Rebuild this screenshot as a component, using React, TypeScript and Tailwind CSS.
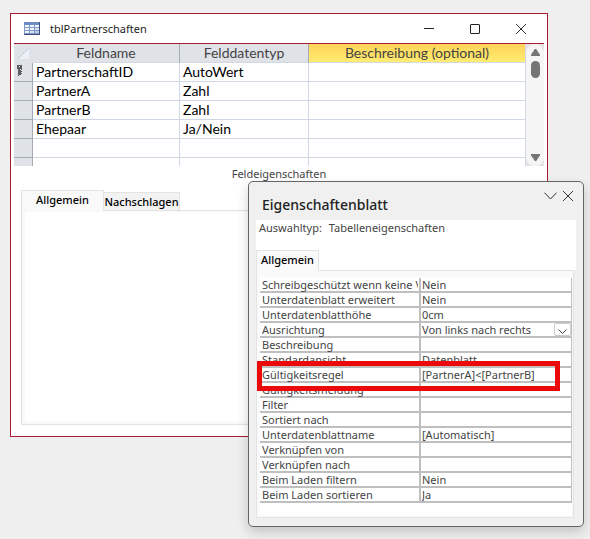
import { useState } from "react";

interface Field {
  name: string;
  type: string;
  primary?: boolean;
}

interface Property {
  id: string;
  label: string;
  value: string;
  options?: string[];
}

const fields: Field[] = [
  { name: "PartnerschaftID", type: "AutoWert", primary: true },
  { name: "PartnerA", type: "Zahl" },
  { name: "PartnerB", type: "Zahl" },
  { name: "Ehepaar", type: "Ja/Nein" },
  { name: "", type: "" },
  { name: "", type: "" },
];

const properties: Property[] = [
  { id: "readonly", label: "Schreibgeschützt wenn keine Verbindung", value: "Nein" },
  { id: "expanded", label: "Unterdatenblatt erweitert", value: "Nein" },
  { id: "height", label: "Unterdatenblatthöhe", value: "0cm" },
  {
    id: "orientation",
    label: "Ausrichtung",
    value: "Von links nach rechts",
    options: ["Von links nach rechts", "Von rechts nach links"],
  },
  { id: "description", label: "Beschreibung", value: "" },
  { id: "view", label: "Standardansicht", value: "Datenblatt" },
  { id: "rule", label: "Gültigkeitsregel", value: "[PartnerA]<[PartnerB]" },
  { id: "message", label: "Gültigkeitsmeldung", value: "" },
  { id: "filter", label: "Filter", value: "" },
  { id: "sort", label: "Sortiert nach", value: "" },
  { id: "subname", label: "Unterdatenblattname", value: "[Automatisch]" },
  { id: "linkfrom", label: "Verknüpfen von", value: "" },
  { id: "linkto", label: "Verknüpfen nach", value: "" },
  { id: "loadfilter", label: "Beim Laden filtern", value: "Nein" },
  { id: "loadsort", label: "Beim Laden sortieren", value: "Ja" },
];

function TableIcon() {
  return (
    <svg width="16" height="13" viewBox="0 0 16 13" shapeRendering="crispEdges" aria-hidden="true">
      <rect width="16" height="13" fill="#8299c4" />
      <rect width="16" height="3" fill="#6e8cc4" />
      <path d="M15 0h1v13H0v-1h15z" fill="#3f5078" />
      <g fill="#f2f7fd">
        <rect x="1" y="3" width="4" height="2" />
        <rect x="6" y="3" width="4" height="2" />
        <rect x="11" y="3" width="4" height="2" />
        <rect x="1" y="6" width="4" height="2" />
        <rect x="6" y="6" width="4" height="2" />
        <rect x="11" y="6" width="4" height="2" fill="#d5e3f5" />
        <rect x="1" y="9" width="4" height="2" />
        <rect x="6" y="9" width="4" height="2" fill="#d5e3f5" />
        <rect x="11" y="9" width="4" height="2" fill="#b9cdec" />
      </g>
    </svg>
  );
}

function KeyIcon() {
  return (
    <svg width="6" height="11" viewBox="0 0 6 11" shapeRendering="crispEdges" role="img" aria-label="Primärschlüssel">
      <path d="M0 0h5v4H0zM1 4h2v6H2v1H1zM4 4h1v1h-1zM4 6h1v1h-1zM4 8h1v1h-1zM3 5h1v5h-1z" fill="#5c5c5c" />
      <path d="M2 1h1v1H2z" fill="#dfe3e8" />
    </svg>
  );
}

function CloseIcon({ size }: { size: number }) {
  return (
    <svg width={size} height={size} viewBox="0 0 10 10" fill="none" stroke="#333" aria-hidden="true">
      <path d="M0 0L10 10M10 0L0 10" />
    </svg>
  );
}

function ScrollBar() {
  return (
    <div className="flex w-[18px] shrink-0 flex-col items-center rounded-full bg-[#f5f5f5] py-[5px]">
      <svg width="9" height="7" viewBox="0 0 9 7" aria-hidden="true">
        <path d="M3.8 0h1.4L9 5.8V7H0V5.8z" fill="#757575" />
      </svg>
      <div className="mt-[5px] h-[17px] w-[9px] rounded-full bg-[#757575]" />
      <svg className="mt-auto" width="9" height="7" viewBox="0 0 9 7" aria-hidden="true">
        <path d="M0 0h9v1.2L5.2 7H3.8L0 1.2z" fill="#757575" />
      </svg>
    </div>
  );
}

function FieldGrid() {
  return (
    <div className="mx-[3px] flex h-[123px] overflow-hidden border-t border-[#a81c30] bg-[#e4e4e4]">
      <table className="w-full table-fixed border-separate border-spacing-0 bg-white font-['Lato','Noto_Sans',sans-serif] text-[14px] leading-[18px] text-black">
        <thead>
          <tr className="text-[#444]">
            <th className="h-[19px] w-[19px] border-b border-[#dfe3e8] bg-[#dfe3e8] p-0">
              <svg className="mx-auto" width="11" height="11" viewBox="0 0 11 11" aria-hidden="true">
                <path d="M11 0v11H0z" fill="#edf0f4" />
                <path d="M0 11L11 0" stroke="#b9cfe4" />
              </svg>
            </th>
            <th className="h-[19px] w-[147px] border-r border-b border-r-[#a5abb4] border-b-[#d0d7e5] bg-[#dfe3e8] p-0 font-normal">
              Feldname
            </th>
            <th className="h-[19px] w-[129px] border-r border-b border-r-[#a5abb4] border-b-[#d0d7e5] bg-[#dfe3e8] p-0 font-normal">
              Felddatentyp
            </th>
            <th className="h-[19px] border-r border-b border-[#d0d7e5] bg-linear-to-b from-[#ffd458] to-[#ffec70] p-0 font-normal">
              Beschreibung (optional)
            </th>
          </tr>
        </thead>
        <tbody>
          {fields.map((field, i) => (
            <tr key={i}>
              <td className="h-[19px] border-r border-b border-[#a5abb4] bg-[#dfe3e8] p-0">
                {field.primary && (
                  <div className="flex h-[15px] items-start pl-[3px]">
                    <KeyIcon />
                  </div>
                )}
              </td>
              <td className="h-[19px] border-r border-b border-[#d0d7e5] py-0 pr-0 pl-[3px]">{field.name}</td>
              <td className="h-[19px] border-r border-b border-[#d0d7e5] py-0 pr-0 pl-[3px]">{field.type}</td>
              <td className="h-[19px] border-r border-b border-[#d0d7e5] p-0" />
            </tr>
          ))}
        </tbody>
      </table>
      <ScrollBar />
    </div>
  );
}

function DesignWindow() {
  const [tab, setTab] = useState("Allgemein");

  return (
    <section className="mr-[42px] ml-[10px] flex h-[424px] flex-col border border-[#a81c30] bg-white">
      <header className="flex h-[29px] shrink-0 items-center pr-[21px] pl-[13px]">
        <TableIcon />
        <h1 className="ml-[10px] flex-1 text-[11px] leading-[15px] text-[#222]">tblPartnerschaften</h1>
        <div className="flex items-center gap-[36px]">
          <button type="button" aria-label="Minimieren" className="flex h-[10px] w-[10px] items-center">
            <span className="h-px w-full bg-[#222]" />
          </button>
          <button
            type="button"
            aria-label="Maximieren"
            className="h-[10px] w-[10px] rounded-[1px] border border-[#222]"
          />
          <button type="button" aria-label="Schließen">
            <CloseIcon size={10} />
          </button>
        </div>
      </header>
      <FieldGrid />
      <h2 className="text-center text-[11px] leading-[15px] text-[#444]">Feldeigenschaften</h2>
      <div className="mx-[10px] mt-[9px] mb-[11px] flex flex-1 flex-col">
        <div role="tablist" className="flex h-[20px] items-end text-[11px] font-medium text-black">
          <button
            type="button"
            role="tab"
            aria-selected={tab === "Allgemein"}
            onClick={() => setTab("Allgemein")}
            className="relative -mb-px flex h-[21px] w-[83px] shrink-0 justify-center border border-b-0 border-[#e3e3e3] bg-[#f9f9f9] leading-[18px]"
          >
            Allgemein
          </button>
          <button
            type="button"
            role="tab"
            aria-selected={tab === "Nachschlagen"}
            onClick={() => setTab("Nachschlagen")}
            className="h-[18px] w-[76px] shrink-0 border border-b-0 border-l-0 border-[#e3e3e3] bg-[#f3f3f3] leading-[18px]"
          >
            Nachschlagen
          </button>
        </div>
        <div role="tabpanel" className="flex flex-1 border border-[#e3e3e3] bg-[#f9f9f9] p-[3px] pt-px">
          <div className="flex-1 bg-white" />
        </div>
      </div>
    </section>
  );
}

function PropertyValue({ property }: { property: Property }) {
  const [value, setValue] = useState(property.value);

  if (property.options) {
    return (
      <div className="relative h-[13px]">
        <select
          id={property.id}
          value={value}
          onChange={(e) => setValue(e.target.value)}
          className="block h-[13px] w-full appearance-none bg-transparent p-0 leading-[13px]"
        >
          {property.options.map((option) => (
            <option key={option}>{option}</option>
          ))}
        </select>
        <span className="pointer-events-none absolute top-0 right-0 flex h-[13px] w-[17px] items-end justify-center rounded-[2px] border border-[#ccc] bg-white pb-px">
          <svg width="9" height="5" viewBox="0 0 9 5" fill="none" stroke="#444" aria-hidden="true">
            <path d="M0.5 0.5l4 4 4-4" />
          </svg>
        </span>
      </div>
    );
  }

  return (
    <input
      id={property.id}
      type="text"
      value={value}
      onChange={(e) => setValue(e.target.value)}
      className="block h-[13px] w-full bg-transparent p-0 leading-[13px] outline-none"
    />
  );
}

function PropertySheet() {
  return (
    <aside className="absolute top-[181px] right-[6px] left-[248px] rounded-[5px] border border-[#666] bg-[#f0f0f0] px-[7px] pb-[8px] shadow-[0_5px_12px_rgba(0,0,0,0.18)]">
      <header className="flex h-[38px] pl-[6px]">
        <h2 className="flex-1 pt-[12px] text-[14px] leading-[22px] font-medium text-[#222]">Eigenschaftenblatt</h2>
        <div className="flex h-[28px] items-center gap-[6px] pr-[3px]">
          <button type="button" aria-label="Optionen">
            <svg width="13" height="8" viewBox="0 0 13 8" fill="none" stroke="#333" aria-hidden="true">
              <path d="M0.5 0.7l6 6.3 6-6.3" />
            </svg>
          </button>
          <button type="button" aria-label="Schließen">
            <CloseIcon size={10} />
          </button>
        </div>
      </header>
      <p className="flex h-[30px] gap-[7px] bg-white pl-[3px] text-[11px] leading-[16px] text-[#444]">
        <span>Auswahltyp:</span>
        <span>Tabelleneigenschaften</span>
      </p>
      <div role="tablist" className="flex h-[20px] bg-white">
        <button
          type="button"
          role="tab"
          aria-selected="true"
          className="relative flex h-[21px] w-[63px] justify-center border border-b-0 border-[#e3e3e3] bg-[#f9f9f9] text-[11px] leading-[18px] font-medium text-black"
        >
          Allgemein
        </button>
      </div>
      <div
        role="tabpanel"
        className="mr-[2px] border border-[#e3e3e3] bg-[#f9f9f9] pt-[6px] pr-px pb-[2px] pl-[3px]"
      >
        <div className="relative bg-white pt-px pb-[12px]">
          <table className="w-full table-fixed border-separate border-spacing-0 text-[11px] leading-[13px] text-[#444]">
            <tbody>
              {properties.map((property) => (
                <tr key={property.id}>
                  <th className="h-[15px] w-[161px] border-r-2 border-b-2 border-[#bfbfbf] py-0 pr-px pl-[2px] text-left font-normal">
                    <label htmlFor={property.id} className="block h-[13px] overflow-x-clip whitespace-nowrap">
                      {property.label}
                    </label>
                  </th>
                  <td className="h-[15px] border-r border-b-2 border-[#bfbfbf] py-0 pr-0 pl-px">
                    <PropertyValue property={property} />
                  </td>
                </tr>
              ))}
            </tbody>
          </table>
          {/* marks the validation rule */}
          <div className="pointer-events-none absolute top-[84px] right-[12px] -left-[3px] h-[30px] border-[5px] border-[#ec0909]" />
        </div>
      </div>
    </aside>
  );
}

export default function App() {
  return (
    <main className="relative min-h-screen overflow-hidden bg-[#efefef] pt-[13px] font-['Noto_Sans','Open_Sans',sans-serif]">
      <DesignWindow />
      <PropertySheet />
    </main>
  );
}
